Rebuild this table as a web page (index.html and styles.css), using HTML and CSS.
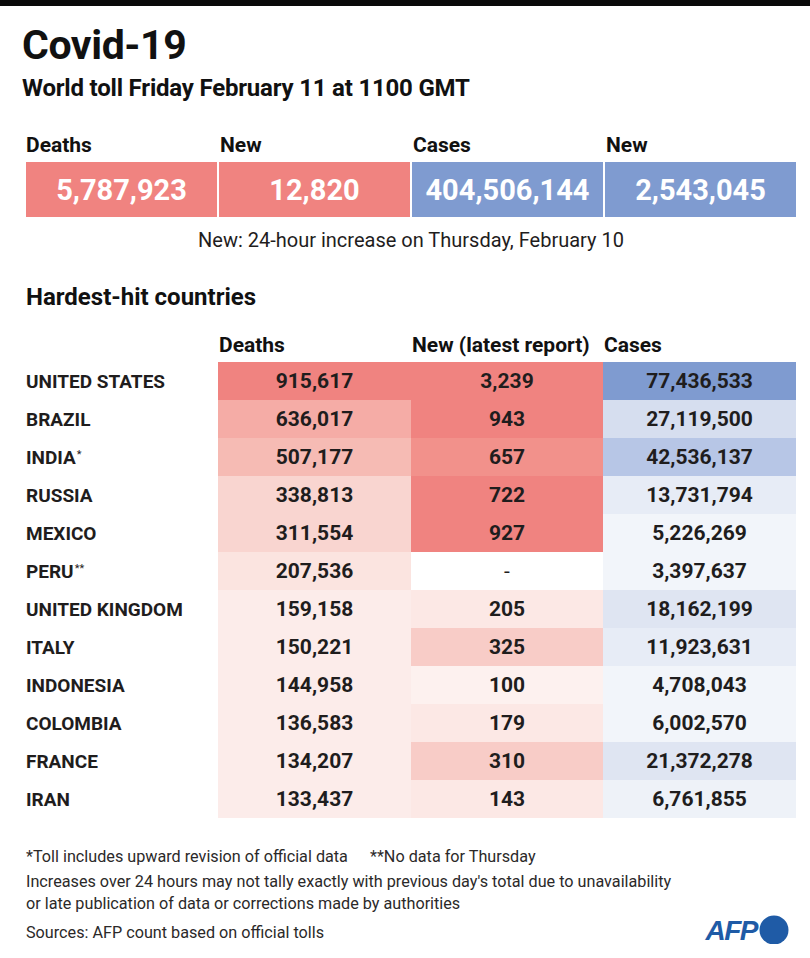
FILE: index.html
```html
<!DOCTYPE html>
<html lang="en">
<head>
<meta charset="utf-8">
<title>Covid-19 World toll</title>
<link rel="stylesheet" href="styles.css">
</head>
<body>
<div class="topbar"></div>
<main class="page">
  <h1 class="title">Covid-19</h1>
  <h2 class="subtitle">World toll Friday February 11 at 1100 GMT</h2>

  <section class="totals">
    <div class="total">
      <div class="total-label">Deaths</div>
      <div class="total-value red">5,787,923</div>
    </div>
    <div class="total">
      <div class="total-label">New</div>
      <div class="total-value red">12,820</div>
    </div>
    <div class="total">
      <div class="total-label">Cases</div>
      <div class="total-value blue">404,506,144</div>
    </div>
    <div class="total">
      <div class="total-label">New</div>
      <div class="total-value blue">2,543,045</div>
    </div>
  </section>
  <p class="caption">New: 24-hour increase on Thursday, February 10</p>

  <h3 class="section-title">Hardest-hit countries</h3>

  <div class="table">
    <div class="th"></div>
    <div class="th">Deaths</div>
    <div class="th">New (latest report)</div>
    <div class="th">Cases</div>

    <div class="country">UNITED STATES</div>
    <div class="cell r6">915,617</div>
    <div class="cell r6">3,239</div>
    <div class="cell b6">77,436,533</div>

    <div class="country">BRAZIL</div>
    <div class="cell r4">636,017</div>
    <div class="cell r6">943</div>
    <div class="cell b3">27,119,500</div>

    <div class="country">INDIA<sup>*</sup></div>
    <div class="cell r3">507,177</div>
    <div class="cell r5">657</div>
    <div class="cell b4">42,536,137</div>

    <div class="country">RUSSIA</div>
    <div class="cell r2">338,813</div>
    <div class="cell r6">722</div>
    <div class="cell b1">13,731,794</div>

    <div class="country">MEXICO</div>
    <div class="cell r2">311,554</div>
    <div class="cell r6">927</div>
    <div class="cell b0">5,226,269</div>

    <div class="country">PERU<sup>**</sup></div>
    <div class="cell r1">207,536</div>
    <div class="cell empty">-</div>
    <div class="cell b0">3,397,637</div>

    <div class="country">UNITED KINGDOM</div>
    <div class="cell r0">159,158</div>
    <div class="cell n1">205</div>
    <div class="cell b2">18,162,199</div>

    <div class="country">ITALY</div>
    <div class="cell r0">150,221</div>
    <div class="cell n2">325</div>
    <div class="cell b1">11,923,631</div>

    <div class="country">INDONESIA</div>
    <div class="cell r0">144,958</div>
    <div class="cell n0">100</div>
    <div class="cell b0">4,708,043</div>

    <div class="country">COLOMBIA</div>
    <div class="cell r0">136,583</div>
    <div class="cell n1">179</div>
    <div class="cell b0">6,002,570</div>

    <div class="country">FRANCE</div>
    <div class="cell r0">134,207</div>
    <div class="cell n2">310</div>
    <div class="cell b2">21,372,278</div>

    <div class="country">IRAN</div>
    <div class="cell r0">133,437</div>
    <div class="cell n1">143</div>
    <div class="cell b0b">6,761,855</div>
  </div>

  <footer class="notes">
    <p class="note-line"><span>*Toll includes upward revision of official data</span><span>**No data for Thursday</span></p>
    <p class="note-para">Increases over 24 hours may not tally exactly with previous day's total due to unavailability<br>or late publication of data or corrections made by authorities</p>
    <div class="source-row">
      <p class="note-source">Sources: AFP count based on official tolls</p>
      <div class="logo">
        <span class="logo-text">AFP</span>
        <svg class="logo-dot" width="30" height="30" viewBox="0 0 30 30" aria-hidden="true"><circle cx="15" cy="15" r="14.5" fill="#1f5ba6"/></svg>
      </div>
    </div>
  </footer>
</main>
</body>
</html>
```

FILE: styles.css
```css
* { box-sizing: border-box; }

html, body {
  margin: 0;
  padding: 0;
  background: #ffffff;
}

body {
  width: 810px;
  font-family: Roboto, "Liberation Sans", sans-serif;
  color: #1f1d1d;
}

.topbar {
  height: 6px;
  background: #0a0a0a;
}

.page {
  padding: 0 14px 0 26px;
}

.title {
  margin: 15px 0 0 -4px;
  font-size: 41px;
  line-height: 48px;
  font-weight: 700;
  letter-spacing: -0.4px;
  color: #111;
}

.subtitle {
  margin: 5px 0 0 -4px;
  font-size: 24px;
  line-height: 28px;
  font-weight: 700;
  letter-spacing: -0.2px;
  color: #111;
}

.totals {
  margin-top: 31px;
  display: grid;
  grid-template-columns: repeat(4, 1fr);
  column-gap: 2px;
}

.total-label {
  font-size: 21px;
  line-height: 24px;
  font-weight: 700;
  color: #111;
  height: 29px;
}

.total:nth-child(n+2) .total-label { padding-left: 1px; }

.total-value {
  height: 55px;
  display: flex;
  align-items: center;
  justify-content: center;
  font-size: 29px;
  font-weight: 700;
  color: #ffffff;
}

.total-value.red { background: #f08380; }
.total-value.blue { background: #7f9bd0; }

.caption {
  margin: 10px 0 0;
  text-align: center;
  font-size: 20px;
  line-height: 26px;
  color: #1f1d1d;
}

.section-title {
  margin: 30px 0 0;
  font-size: 24px;
  line-height: 28px;
  font-weight: 700;
  color: #111;
}

.table {
  margin-top: 22px;
  display: grid;
  grid-template-columns: 192px 193px 192px 193px;
  grid-template-rows: 29px;
  grid-auto-rows: 38px;
}

.th {
  font-size: 21px;
  line-height: 24px;
  font-weight: 700;
  color: #111;
  padding-left: 1px;
}

.country {
  display: flex;
  align-items: center;
  font-size: 19px;
  font-weight: 700;
  color: #1f1d1d;
}

.country sup {
  font-size: 11px;
  font-weight: 400;
  align-self: flex-start;
  margin-top: 10px;
  margin-left: 1px;
}

.cell {
  display: flex;
  align-items: center;
  justify-content: center;
  font-size: 21px;
  font-weight: 700;
  color: #1f1d1d;
}

.cell.empty { background: #ffffff; font-weight: 400; }

/* deaths shades */
.r6 { background: #f08380; }
.r5 { background: #f2918b; }
.r4 { background: #f5aca6; }
.r3 { background: #f6bbb4; }
.r2 { background: #f9d5d0; }
.r1 { background: #fbe4e0; }
.r0 { background: #fcecea; }

/* new shades */
.n2 { background: #f8ccc7; }
.n1 { background: #fce8e5; }
.n0 { background: #fdf1ef; }

/* cases shades */
.b6 { background: #7f9bd0; }
.b4 { background: #b7c6e6; }
.b3 { background: #d6deef; }
.b2 { background: #dfe5f2; }
.b1 { background: #e7ecf6; }
.b0 { background: #f2f5fa; }
.b0b { background: #eef2f8; }

.notes {
  margin-top: 27px;
  color: #2b2929;
  font-size: 16.2px;
  line-height: 23px;
}

.notes p { margin: 0; }

.note-line {
  display: flex;
  gap: 22px;
}

.note-para {
  margin-top: 3px !important;
  line-height: 22px;
}

.note-source { margin-top: 1px !important; }

.source-row {
  display: flex;
  justify-content: space-between;
  align-items: flex-end;
}

.logo {
  display: flex;
  align-items: flex-end;
  gap: 2px;
  margin-right: 7px;
  margin-bottom: -1px;
}

.logo-text {
  font-family: "Liberation Sans", Arial, sans-serif;
  font-size: 28px;
  line-height: 28px;
  font-weight: 700;
  font-style: italic;
  letter-spacing: -1.5px;
  color: #1f5ba6;
}

.logo-dot { display: block; }
```
